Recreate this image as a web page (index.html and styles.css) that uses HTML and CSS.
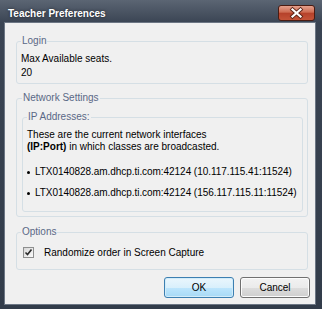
FILE: index.html
```html
<!DOCTYPE html>
<html>
<head>
	<title>Teacher Preferences</title>
	<link rel="stylesheet" href="styles.css">
</head>
<body>
	<div class="window">
		<div class="titlebar">
			<span class="title">Teacher Preferences</span>
			<button class="close" type="button">
				<svg width="37" height="16" viewBox="0 0 37 16">
					<path d="M14.5 4.5 L22.5 11.5 M22.5 4.5 L14.5 11.5" stroke="#5b2418" stroke-width="4" stroke-linecap="square" fill="none"/>
					<path d="M14.5 4.5 L22.5 11.5 M22.5 4.5 L14.5 11.5" stroke="#ffffff" stroke-width="2.2" stroke-linecap="square" fill="none"/>
				</svg>
			</button>
		</div>
		<div class="content">
			<fieldset class="group login">
				<legend>Login</legend>
				<div class="line">Max Available seats.</div>
				<div class="line">20</div>
			</fieldset>

			<fieldset class="group network">
				<legend>Network Settings</legend>
				<fieldset class="group ip">
					<legend>IP Addresses:</legend>
					<p class="intro">These are the current network interfaces<br><b>(IP:Port)</b> in which classes are broadcasted.</p>
					<ul class="addresses">
						<li>LTX0140828.am.dhcp.ti.com:42124 (10.117.115.41:11524)</li>
						<li>LTX0140828.am.dhcp.ti.com:42124 (156.117.115.11:11524)</li>
					</ul>
				</fieldset>
			</fieldset>

			<fieldset class="group options">
				<legend>Options</legend>
				<label class="check">
					<span class="box">
						<svg width="9" height="9" viewBox="0 0 9 9"><path d="M1.5 4.5 L3.5 6.5 L7.5 1.5" stroke="#2b2b2b" stroke-width="1.6" fill="none"/></svg>
					</span>
					Randomize order in Screen Capture
				</label>
			</fieldset>

			<div class="actions">
				<button class="btn default" type="button">OK</button>
				<button class="btn" type="button">Cancel</button>
			</div>
		</div>
	</div>
</body>
</html>
```

FILE: styles.css
```css
body { margin: 0; background: #313b49; font-family: "Liberation Sans", Arial, sans-serif; font-size: 10px; color: #000; }

.window { width: 322px; height: 309px; display: flex; flex-direction: column; background: linear-gradient(#5b6573, #3a4453 23px, #323c4a); }

.titlebar { height: 23px; display: flex; align-items: flex-start; padding-left: 8px; }
.title { margin-top: 8px; line-height: 12px; color: #fff; font-weight: bold; text-shadow: 0 0 3px rgba(0, 0, 0, 0.6); }
.close { margin: 5px 7px 0 auto; width: 37px; height: 16px; padding: 0; border: 1px solid #4a1c12; border-radius: 3px; background: linear-gradient(#e3a08c, #cd6a50 45%, #b5412a 50%, #c45338); display: flex; align-items: center; justify-content: center; }
.close svg { display: block; margin: -1px; }

.content { flex: 1; margin: 0 7px 5px 5px; padding: 12px 7px 6px 11px; background: #f0f0f0; box-shadow: 0 0 0 1px #6c7684; }

.group { margin: 0; border: 1px solid #d5dfe5; border-radius: 3px; min-width: 0; }
.group legend { padding: 0 1px; line-height: 12px; color: #5a6886; }

.login { padding: 5px 4px 3px; }
.line { line-height: 14px; }

.network { margin-top: 8px; padding: 7px 4px 4px 5px; }
.ip { padding: 6px 4px 12px; }
.intro { margin: 0; line-height: 12px; }
.addresses { list-style: none; margin: 13px 0 0; padding: 0; }
.addresses li { line-height: 12px; white-space: nowrap; letter-spacing: -0.05px; }
.addresses li + li { margin-top: 9px; }
.addresses li::before { content: ""; display: inline-block; width: 3px; height: 3px; border-radius: 50%; background: #000; margin-right: 5px; vertical-align: middle; }

.options { margin-top: 9px; padding: 7px 4px 10px 6px; }
.options legend { margin-left: -2px; }
.check { display: flex; align-items: center; height: 14px; }
.box { width: 11px; height: 11px; box-sizing: border-box; margin-right: 10px; border: 1px solid #8e8f8f; background: linear-gradient(135deg, #d8d8d8, #fbfbfb); display: flex; align-items: center; justify-content: center; }
.box svg { display: block; }

.actions { display: flex; justify-content: flex-end; gap: 6px; margin: 7px -2px 0 0; }
.btn { width: 70px; height: 21px; padding: 0; font: inherit; color: #000; border: 1px solid #707070; border-radius: 3px; background: linear-gradient(#f2f2f2, #ebebeb 50%, #dddddd 50%, #cfcfcf); box-shadow: inset 0 0 0 1px #fcfcfc; }
.btn.default { border-color: #3c7fb1; background: linear-gradient(#eaf6fd, #d9f0fc 50%, #bee6fd 50%, #a7d9f5); box-shadow: inset 0 0 0 1px #d2ecf9; }
```
